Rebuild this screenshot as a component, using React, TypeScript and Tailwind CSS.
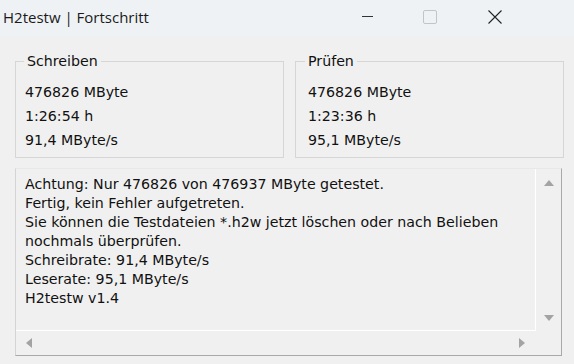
import React from "react";

const LINES = [
  "Achtung: Nur 476826 von 476937 MByte getestet.",
  "Fertig, kein Fehler aufgetreten.",
  "Sie können die Testdateien *.h2w jetzt löschen oder nach Belieben",
  "nochmals überprüfen.",
  "Schreibrate: 91,4 MByte/s",
  "Leserate: 95,1 MByte/s",
  "H2testw v1.4",
];

function GroupBox({ title, rows, right }: { title: string; rows: string[]; right?: boolean }) {
  return (
    <fieldset className={"shrink-0 w-[269px] h-[104px] border border-[#d6d6d6] pt-[9px] " + (right ? "pl-[12px]" : "pl-[9px]")}>
      <legend className={"px-[3px] leading-[14px] " + (right ? "-ml-[3px]" : "-ml-[1px]")}>{title}</legend>
      <div className="flex flex-col gap-[5px] mt-[6px]">
        {rows.map((r) => (
          <div key={r} className="leading-[19px]">{r}</div>
        ))}
      </div>
    </fieldset>
  );
}

function Arrow({ dir }: { dir: "up" | "down" | "left" | "right" }) {
  const pts = {
    up: "0,7 5,1 10,7",
    down: "0,1 10,1 5,7",
    left: "7,0 7,10 1,5",
    right: "1,0 1,10 7,5",
  }[dir];
  const vertical = dir === "up" || dir === "down";
  return (
    <svg width={vertical ? 10 : 8} height={vertical ? 8 : 10} viewBox={vertical ? "0 0 10 8" : "0 0 8 10"}>
      <polygon points={pts} fill="#a3a3a3" />
    </svg>
  );
}

export default function App() {
  return (
    <div
      className="w-[574px] h-[364px] bg-[#f0f0f0] text-[#000] overflow-hidden"
      style={{ fontFamily: "Tahoma, 'DejaVu Sans', sans-serif" }}
    >
      {/* Title bar */}
      <div className="h-[36px] bg-[#eff2f5] flex items-center">
        <span
          className="pl-[3px] pb-[2px] text-[15px] text-[#1a1a1a]"
          style={{ fontFamily: "'Open Sans', 'Noto Sans', sans-serif" }}
        >
          H2testw | Fortschritt
        </span>
        <div className="ml-auto flex items-center h-full pb-[3px]">
          <div className="w-[11px] h-px bg-[#333]" />
          <div className="w-[14px] h-[14px] border border-[#c4c4c4] rounded-[2px] ml-[50px]" />
          <svg className="ml-[51px] mr-[72px]" width="14" height="14" viewBox="0 0 14 14">
            <path d="M0.5 0.5 L13.5 13.5 M13.5 0.5 L0.5 13.5" stroke="#222" strokeWidth="1.1" />
          </svg>
        </div>
      </div>

      {/* Body */}
      <div className="px-[15px] pt-[18px] text-[14.2px] text-[#111]">
        <div className="flex gap-[11px]">
          <GroupBox title="Schreiben" rows={["476826 MByte", "1:26:54 h", "91,4 MByte/s"]} />
          <GroupBox title="Prüfen" rows={["476826 MByte", "1:23:36 h", "95,1 MByte/s"]} right />
        </div>

        <div className="mt-[10px] w-[547px] h-[188px] border-t border-l border-t-[#e8e8e8] border-l-[#d4d4d4] border-r border-b border-r-[#a9a9a9] border-b-[#a9a9a9] flex flex-col">
          <div className="flex h-[162px]">
            <div className="w-[520px] border-r border-b border-white pl-[9px] pt-[6px]">
              {LINES.map((l) => (
                <div key={l} className="leading-[19px] whitespace-nowrap">{l}</div>
              ))}
            </div>
            <div className="flex-1 flex flex-col items-center justify-between pt-[10px] pb-[9px]">
              <Arrow dir="up" />
              <Arrow dir="down" />
            </div>
          </div>
          <div className="flex h-[24px]">
            <div className="w-[520px] flex items-center justify-between pl-[9px] pr-[10px]">
              <Arrow dir="left" />
              <Arrow dir="right" />
            </div>
          </div>
        </div>
      </div>
    </div>
  );
}
